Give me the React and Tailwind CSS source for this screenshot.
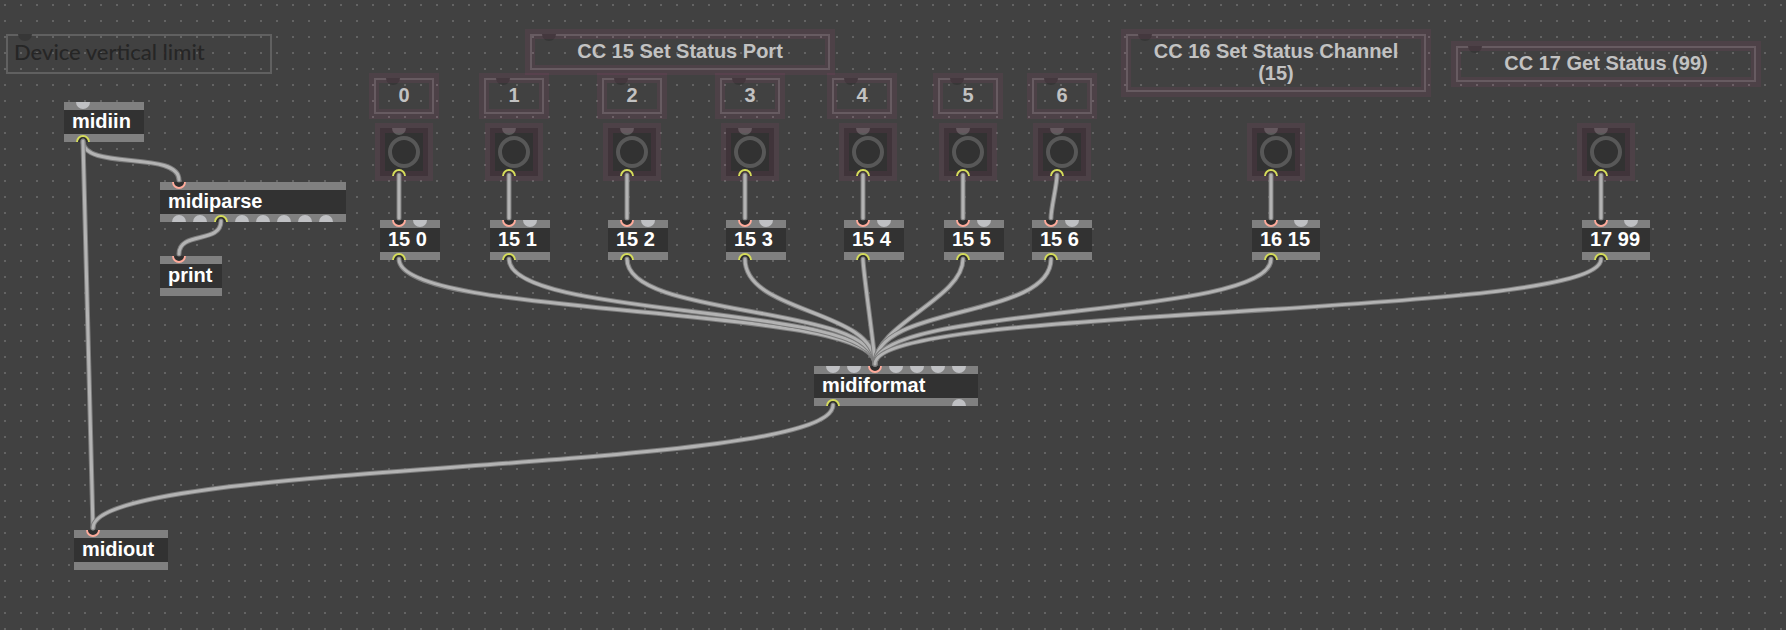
const BOXES = [
  { id: "midiin", text: "midiin", x: 64, y: 102, w: 80, inlets: [19], outlets: [19] },
  { id: "midiparse", text: "midiparse", x: 160, y: 182, w: 186, inlets: [19], outlets: [19, 40, 61, 82, 103, 124, 145, 166] },
  { id: "print", text: "print", x: 160, y: 256, w: 62, inlets: [19], outlets: [] },
  { id: "m0", text: "15 0", x: 380, y: 220, w: 60, inlets: [19, 40], outlets: [19] },
  { id: "m1", text: "15 1", x: 490, y: 220, w: 60, inlets: [19, 40], outlets: [19] },
  { id: "m2", text: "15 2", x: 608, y: 220, w: 60, inlets: [19, 40], outlets: [19] },
  { id: "m3", text: "15 3", x: 726, y: 220, w: 60, inlets: [19, 40], outlets: [19] },
  { id: "m4", text: "15 4", x: 844, y: 220, w: 60, inlets: [19, 40], outlets: [19] },
  { id: "m5", text: "15 5", x: 944, y: 220, w: 60, inlets: [19, 40], outlets: [19] },
  { id: "m6", text: "15 6", x: 1032, y: 220, w: 60, inlets: [19, 40], outlets: [19] },
  { id: "m7", text: "16 15", x: 1252, y: 220, w: 68, inlets: [19, 49], outlets: [19] },
  { id: "m8", text: "17 99", x: 1582, y: 220, w: 68, inlets: [19, 49], outlets: [19] },
  { id: "midiformat", text: "midiformat", x: 814, y: 366, w: 164, inlets: [19, 40, 61, 82, 103, 124, 145], outlets: [19, 145] },
  { id: "midiout", text: "midiout", x: 74, y: 530, w: 94, inlets: [19], outlets: [] },
];

const BANGS = [
  { id: "b0", x: 380, y: 128, label: "Send 15 0" },
  { id: "b1", x: 490, y: 128, label: "Send 15 1" },
  { id: "b2", x: 608, y: 128, label: "Send 15 2" },
  { id: "b3", x: 726, y: 128, label: "Send 15 3" },
  { id: "b4", x: 844, y: 128, label: "Send 15 4" },
  { id: "b5", x: 944, y: 128, label: "Send 15 5" },
  { id: "b6", x: 1038, y: 128, label: "Send 15 6" },
  { id: "b7", x: 1252, y: 128, label: "Send 16 15" },
  { id: "b8", x: 1582, y: 128, label: "Send 17 99" },
];

const COMMENTS = [
  { text: "CC 15 Set Status Port", x: 530, y: 34, w: 300 },
  { text: "CC 16 Set Status Channel (15)", x: 1126, y: 34, w: 300 },
  { text: "CC 17 Get Status (99)", x: 1456, y: 46, w: 300 },
  { text: "0", x: 374, y: 78, w: 60 },
  { text: "1", x: 484, y: 78, w: 60 },
  { text: "2", x: 602, y: 78, w: 60 },
  { text: "3", x: 720, y: 78, w: 60 },
  { text: "4", x: 832, y: 78, w: 60 },
  { text: "5", x: 938, y: 78, w: 60 },
  { text: "6", x: 1032, y: 78, w: 60 },
];

// [source, outlet index, destination, inlet index]
const CABLES = [
  ["midiin", 0, "midiparse", 0],
  ["midiparse", 2, "print", 0],
  ["midiin", 0, "midiout", 0],
  ...[0, 1, 2, 3, 4, 5, 6, 7, 8].flatMap((n) => [
    [`b${n}`, 0, `m${n}`, 0],
    [`m${n}`, 0, "midiformat", 2],
  ]),
  ["midiformat", 0, "midiout", 0],
];

const NODES = Object.fromEntries([
  ...BOXES.map((b) => [b.id, { ...b, h: 40 }]),
  ...BANGS.map((b) => [b.id, { ...b, h: 48, inlets: [19], outlets: [19] }]),
]);

const wiredInlet = (id, i) => CABLES.some((c) => c[2] === id && c[3] === i);
const wiredOutlet = (id, i) => CABLES.some((c) => c[0] === id && c[1] === i);

// Cables leave and enter vertically; the slack shrinks as the ends line up.
function cablePath([from, outlet, to, inlet]) {
  const a = NODES[from];
  const b = NODES[to];
  const x1 = a.x + a.outlets[outlet];
  const y1 = a.y + a.h - 1;
  const x2 = b.x + b.inlets[inlet];
  const y2 = b.y - 2;
  const pull = Math.min(12 + 0.46 * (y2 - y1), 8 + 0.36 * Math.abs(x2 - x1));
  return `M${x1} ${y1}C${x1} ${y1 + pull} ${x2} ${y2 - pull} ${x2} ${y2}`;
}

function Port({ x, side, wired, idle = "fill-[#bfc0c3]", core = "fill-[#2e2e2e]" }) {
  const inlet = side === "in";
  return (
    <svg
      aria-hidden="true"
      viewBox={inlet ? "-7 0 14 7" : "-7 -7 14 7"}
      className={inlet ? "absolute top-0 h-[7px] w-[14px]" : "absolute bottom-0 h-[7px] w-[14px]"}
      style={{ left: x - 7 }}
    >
      {wired ? (
        <circle r="6" strokeWidth="1.9" className={`${core} ${inlet ? "stroke-[#ffab9b]" : "stroke-[#d5dc5a]"}`} />
      ) : (
        <circle r="7" className={idle} />
      )}
    </svg>
  );
}

function ObjectBox({ box }) {
  return (
    <div className="absolute bg-[#808080] py-2" style={{ left: box.x, top: box.y, width: box.w }}>
      <div className="h-6 bg-[#323232] pl-2 text-xl leading-[22px] font-bold whitespace-nowrap text-white">
        {box.text}
      </div>
      {box.inlets.map((x, i) => (
        <Port key={`i${i}`} x={x} side="in" wired={wiredInlet(box.id, i)} />
      ))}
      {box.outlets.map((x, i) => (
        <Port key={`o${i}`} x={x} side="out" wired={wiredOutlet(box.id, i)} />
      ))}
    </div>
  );
}

function Selection() {
  return <span className="pointer-events-none absolute -inset-[5px] border-10 border-[#b84880]/11" />;
}

function Bang({ bang }) {
  return (
    <button
      type="button"
      aria-label={bang.label}
      className="absolute size-12 bg-[#323232]"
      style={{ left: bang.x, top: bang.y }}
    >
      <span className="mx-auto block size-8 rounded-full border-4 border-[#585858]" />
      <Port x={19} side="in" idle="fill-[#5b5b5b]" />
      <Selection />
      <Port x={19} side="out" wired core="fill-none" />
    </button>
  );
}

function Comment({ note }) {
  return (
    <div className="absolute" style={{ left: note.x, top: note.y, width: note.w }}>
      <p className="border-2 border-[#5e5e5e] px-2 pt-1 pb-[6px] text-center text-xl leading-[22px] font-bold text-[#c2c2c2]">
        {note.text}
      </p>
      <Port x={19} side="in" idle="fill-[#373737]" />
      <Selection />
    </div>
  );
}

export default function App() {
  return (
    <main className="relative min-h-screen w-full overflow-hidden bg-[#414141] font-['Liberation_Sans',Arial,sans-serif]">
      <svg aria-hidden="true" className="absolute inset-0 h-full w-full">
        <defs>
          <pattern id="grid" width="16" height="16" patternUnits="userSpaceOnUse">
            <rect x="4" y="4" width="2" height="2" className="fill-[#636363]" />
          </pattern>
        </defs>
        <rect width="100%" height="100%" fill="url(#grid)" />
      </svg>

      <div className="absolute top-[34px] left-[6px] w-[266px]">
        <p className="border-2 border-[#606060] px-[6px] pt-[2px] pb-[6px] font-['Lato','Open_Sans',sans-serif] text-[22px] leading-7 font-medium text-[#262626]">
          Device vertical limit
        </p>
        <Port x={19} side="in" idle="fill-[#373737]" />
      </div>

      {COMMENTS.map((note) => (
        <Comment key={note.text} note={note} />
      ))}
      {BANGS.map((bang) => (
        <Bang key={bang.id} bang={bang} />
      ))}
      {BOXES.map((box) => (
        <ObjectBox key={box.id} box={box} />
      ))}

      <svg aria-hidden="true" className="pointer-events-none absolute inset-0 h-full w-full fill-none">
        {CABLES.map((cable) => (
          <g key={cable.join("-")} strokeLinecap="round">
            <path d={cablePath(cable)} strokeWidth="5" className="stroke-[#7c7c7c]" />
            <path d={cablePath(cable)} strokeWidth="3" className="stroke-[#b3b3b3]" />
          </g>
        ))}
      </svg>
    </main>
  );
}
